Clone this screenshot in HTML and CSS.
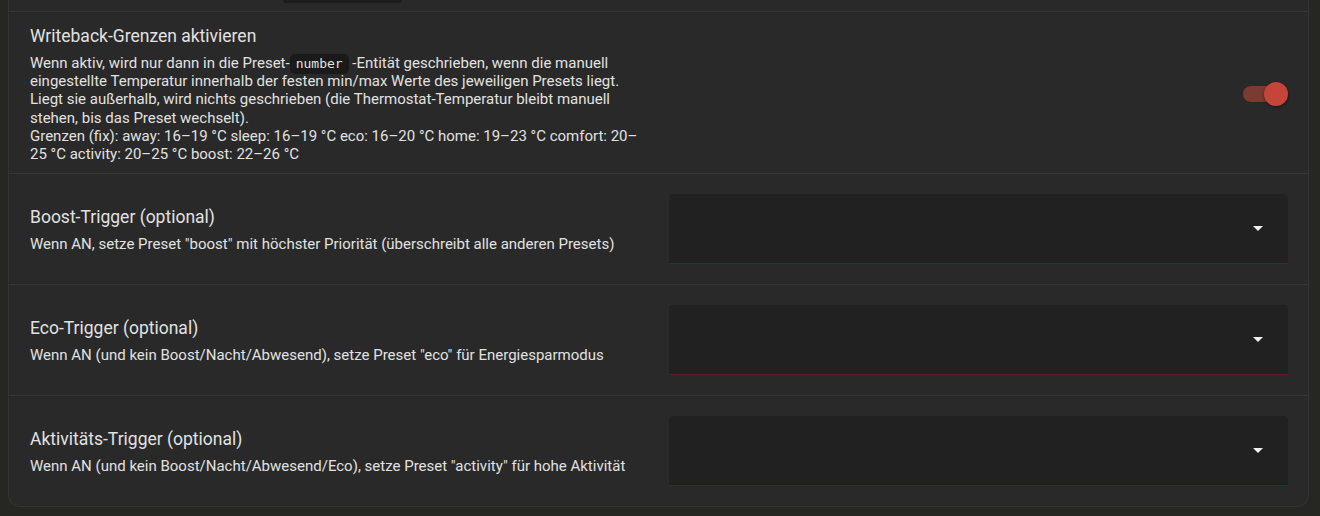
FILE: index.html
```html
<!DOCTYPE html>
<html lang="de">
<head>
<meta charset="utf-8">
<link rel="stylesheet" href="styles.css">
</head>
<body>
<div class="card">
  <div class="prev-row"><div class="prev-box"></div></div>

  <div class="row row-top">
    <div class="info">
      <div class="title">Writeback-Grenzen aktivieren</div>
      <div class="desc">Wenn aktiv, wird nur dann in die Preset-<code>number</code> -Entität geschrieben, wenn die manuell eingestellte Temperatur innerhalb der festen min/max Werte des jeweiligen Presets liegt. Liegt sie außerhalb, wird nichts geschrieben (die Thermostat-Temperatur bleibt manuell stehen, bis das Preset wechselt).<br>Grenzen (fix): away: 16–19 °C sleep: 16–19 °C eco: 16–20 °C home: 19–23 °C comfort: 20–25 °C activity: 20–25 °C boost: 22–26 °C</div>
    </div>
    <div class="control control-end">
      <div class="switch"><div class="track"></div><div class="knob"></div></div>
    </div>
  </div>

  <div class="row">
    <div class="info">
      <div class="title">Boost-Trigger (optional)</div>
      <div class="desc">Wenn AN, setze Preset "boost" mit höchster Priorität (überschreibt alle anderen Presets)</div>
    </div>
    <div class="control">
      <div class="select"><span class="arrow"></span></div>
    </div>
  </div>

  <div class="row">
    <div class="info">
      <div class="title">Eco-Trigger (optional)</div>
      <div class="desc">Wenn AN (und kein Boost/Nacht/Abwesend), setze Preset "eco" für Energiesparmodus</div>
    </div>
    <div class="control">
      <div class="select"><span class="arrow"></span></div>
    </div>
  </div>

  <div class="row row-last">
    <div class="info">
      <div class="title">Aktivitäts-Trigger (optional)</div>
      <div class="desc">Wenn AN (und kein Boost/Nacht/Abwesend/Eco), setze Preset "activity" für hohe Aktivität</div>
    </div>
    <div class="control">
      <div class="select"><span class="arrow"></span></div>
    </div>
  </div>
</div>
</body>
</html>
```
FILE: styles.css
```css
html, body {
  margin: 0;
  padding: 0;
  background: #262622;
  height: 516px;
  overflow: hidden;
}
body {
  padding: 0 11px 0 8px;
  font-family: Roboto, "Liberation Sans", sans-serif;
  color: #e1e1e1;
}
.card {
  background: #292929;
  border: 1px solid #343434;
  border-top: none;
  border-radius: 0 0 12px 12px;
}
.prev-row {
  height: 11px;
  padding-left: 274px;
  border-bottom: 1px solid #363636;
  box-sizing: content-box;
}
.prev-box {
  width: 119px;
  height: 3px;
  background: #1c1c1c;
  border-radius: 0 0 4px 4px;
}
.row {
  display: grid;
  grid-template-columns: 1fr 1fr;
  column-gap: 19px;
  align-items: center;
  padding: 20px 20px 20px 21px;
  height: 70px;
  box-sizing: content-box;
  border-bottom: 1px solid #363636;
}
.row-top {
  height: auto;
  padding-top: 12px;
  padding-bottom: 10px;
}
.row-last {
  border-bottom: none;
}
.info {
  display: flex;
  flex-direction: column;
  gap: 6px;
}
.title {
  font-size: 17.5px;
  line-height: 24px;
  color: #e1e1e1;
}
.desc {
  font-size: 15px;
  line-height: 18.2px;
  color: #e1e1e1;
}
code {
  font-family: "DejaVu Sans Mono", "Liberation Mono", monospace;
  font-size: 13px;
  line-height: 1;
  background: #1a1a1a;
  border-radius: 5px;
  padding: 2px 6px 3px 6px;
}
.control {
  display: flex;
  align-items: center;
}
.control-end {
  justify-content: flex-end;
}
.switch {
  position: relative;
  width: 45px;
  height: 24px;
  display: flex;
  align-items: center;
}
.track {
  width: 37px;
  height: 16px;
  border-radius: 8px;
  background: #7a3b31;
}
.knob {
  position: absolute;
  right: 0;
  top: 0;
  width: 24px;
  height: 24px;
  border-radius: 50%;
  background: #c5453a;
  box-shadow: 0 1px 3px rgba(0, 0, 0, 0.45);
}
.select {
  flex: 1;
  height: 69px;
  background: #212121;
  border-radius: 4px 4px 0 0;
  border-bottom: 1px solid #5e1e1e;
  display: flex;
  align-items: center;
  justify-content: flex-end;
  padding-right: 25px;
}
.arrow {
  width: 0;
  height: 0;
  border-left: 5px solid transparent;
  border-right: 5px solid transparent;
  border-top: 5px solid #f0f0f0;
}
```
